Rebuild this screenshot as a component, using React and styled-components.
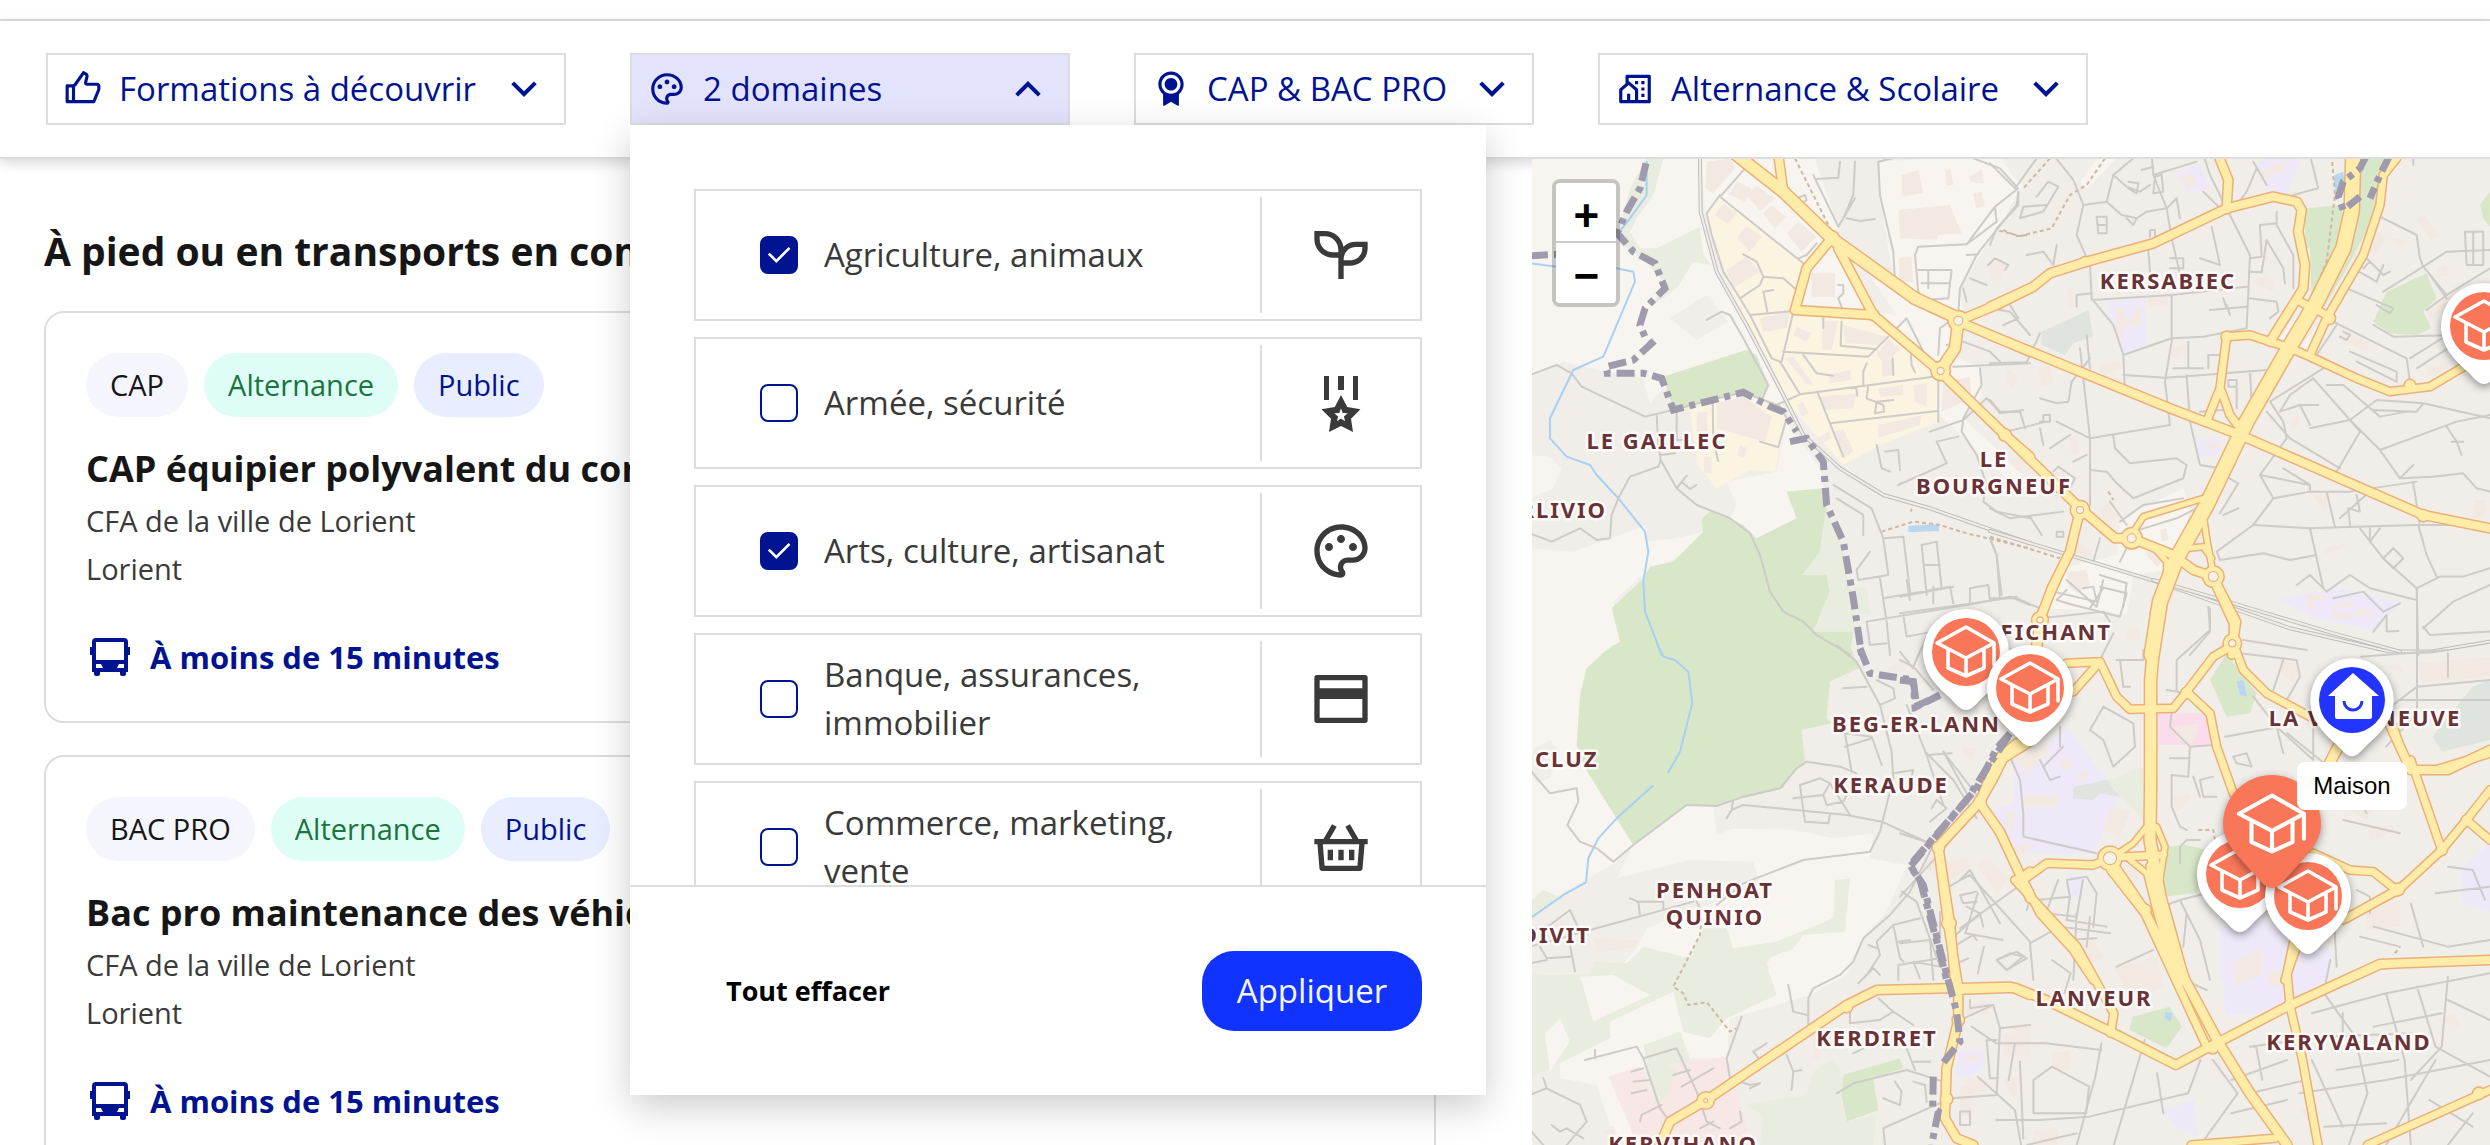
import React, { useState } from "react";
import styled, { createGlobalStyle } from "styled-components";
import {
  RiArrowDownSLine,
  RiArrowUpSLine,
  RiAwardFill,
  RiCheckLine,
  RiCommunityLine,
  RiPaletteLine,
  RiSeedlingLine,
  RiShoppingBasket2Line,
  RiThumbUpLine,
} from "react-icons/ri";

const MedalIcon = () => (
  <svg viewBox="0 0 64 64" fill="currentColor" aria-hidden="true">
    <path d="M15 5h5v24h-5zM29 5h6v14h-6zM44 5h5v24h-5z" />
    <path
      fillRule="evenodd"
      d="M32 24 38.2 36 51.5 38.2 42 47.7 44 61 32 55 20 61 22 47.7 12.5 38.2 25.8 36ZM32 37.5 30.2 42.1 25.3 42.3 29.1 45.4 27.9 50.2 32 47.5 36.1 50.2 34.9 45.4 38.7 42.3 33.8 42.1Z"
    />
  </svg>
);

const CreditCardIcon = () => (
  <svg viewBox="0 0 24 24" fill="currentColor" aria-hidden="true">
    <path
      fillRule="evenodd"
      d="M3 3h18a1 1 0 0 1 1 1v16a1 1 0 0 1-1 1H3a1 1 0 0 1-1-1V4a1 1 0 0 1 1-1ZM4 5v3h16V5ZM4 12v7h16v-7Z"
    />
  </svg>
);

const BusIcon = () => (
  <svg width="48" height="48" viewBox="0 0 48 48" fill="currentColor" aria-hidden="true">
    <path
      fillRule="evenodd"
      d="M10 5H38A4 4 0 0 1 42 9V14H44V22H42V39H40V41A2 2 0 0 1 38 43H36A2 2 0 0 1 34 41V39H14V41A2 2 0 0 1 12 43H10A2 2 0 0 1 8 41V39H6V22H4V14H6V9A4 4 0 0 1 10 5ZM10 9V27H38V9ZM10 31V35H17L15 31ZM33 31 31 35H38V31Z"
    />
  </svg>
);

const DOMAINS = [
  { id: "agriculture", label: "Agriculture, animaux", Icon: RiSeedlingLine },
  { id: "armee", label: "Armée, sécurité", Icon: MedalIcon },
  { id: "arts", label: "Arts, culture, artisanat", Icon: RiPaletteLine },
  { id: "banque", label: "Banque, assurances, immobilier", Icon: CreditCardIcon },
  { id: "commerce", label: "Commerce, marketing, vente", Icon: RiShoppingBasket2Line },
];

const FORMATIONS = [
  {
    id: 1,
    diploma: "CAP",
    title: "CAP équipier polyvalent du commerce",
    school: "CFA de la ville de Lorient",
    city: "Lorient",
    duration: "À moins de 15 minutes",
  },
  {
    id: 2,
    diploma: "BAC PRO",
    title: "Bac pro maintenance des véhicules",
    school: "CFA de la ville de Lorient",
    city: "Lorient",
    duration: "À moins de 15 minutes",
  },
];

const AREA_COLORS = {
  field: "#f8f5f0",
  town: "#f1eeea",
  zone: "#fbf4e0",
  wood: "#d8e7c8",
  grass: "#e8ede0",
  school: "#efe8f9",
  health: "#f7e8e6",
  shop: "#fbdcec",
  cemetery: "#dfe4de",
  water: "#b9d7f2",
  building: "#f3e9e3",
};

// Each tile keeps its own coordinates, the matrix puts it on the map.
const TILES = [
  {
    matrix: "matrix(.3333 0 0 .3333 -2 -4)",
    areas: [
      ["field", "M0 0H510L520 230 560 330 650 500 740 660 770 800 870 940 880 1000 770 1010 800 1090 680 1150 600 1090 620 1050 590 980 740 950 770 790 400 700 360 745 340 670 230 650 100 620 0 660Z"],
      ["field", "M0 1180 130 1190 350 1110 350 1160 440 1150 520 1130 440 1210 360 1240 250 1340 270 1460 210 1500H0Z"],
      ["field", "M0 900 60 905 95 940 70 1000 0 1030Z"],
      ["field", "M510 0H850L925 215 905 250 1030 470 1100 480 1000 330 1090 370 1050 120 1045 20 1370 0 1480 90 1290 400 1300 480 1270 600 1350 640 1355 720 1300 790 1480 960 1440 980 1230 780 1040 490 800 470 530 200Z"],
      ["town", "M420 490 530 420 595 500 500 555Z"],
      ["zone", "M570 125 820 325 790 470 1040 490 1230 660 1225 800 1050 870 940 930 770 740 650 500 580 350 530 200Z"],
      ["zone", "M480 760 560 740 720 745 770 790 735 950 660 945 560 1000 500 925Z"],
      ["wood", "M400 665 600 600 650 585 680 600 715 690 700 730 640 710 540 735 430 765Z"],
      ["wood", "M540 1070 640 1110 680 1150 800 1090 770 1010 880 1000 890 1050 870 1190 890 1260 900 1310 850 1430 970 1430 960 1500H210L270 1460 245 1360 340 1270 360 1235 430 1220 520 1130 515 1090Z"],
      ["grass", "M300 100 350 10 400 12 370 120 320 190 300 230 330 280 380 280 510 215 520 300 545 330 490 320 440 400 370 450 400 380 350 320 290 280 265 230Z"],
      ["grass", "M890 1060 930 1150 960 1300 990 1430 850 1430 900 1310 890 1260 815 1260 870 1190ZM970 1300 1010 1295 1020 1375 985 1380Z"],
      ["water", "M1135 1112 1227 1108V1128L1135 1132Z"],
      ["building", "M560 745 640 725 725 785 705 860 560 820ZM500 770H532V830H500ZM522 905H545V955H522ZM630 870 652 880 640 908 622 900Z"],
      ["building", "M530 20 600 10 615 40 550 115 525 100ZM555 180 580 145 622 175 592 208ZM620 80 665 100 645 140 598 118ZM650 120 680 92 735 130 690 168ZM700 175 725 150 768 185 735 222ZM770 235 805 200 860 245 815 290ZM620 250 650 212 695 245 660 290Z"],
      ["building", "M590 345 650 305 690 350 610 398ZM845 355H915V425H845ZM1105 165 1260 150 1295 235 1225 240 1220 255 1110 250ZM1115 60 1165 45 1180 115 1115 125ZM1245 45 1262 42 1270 90 1248 92ZM1318 65 1355 42 1362 85 1322 82ZM1330 115 1355 110 1365 155 1338 160ZM1105 310 1145 305 1150 380 1110 385Z"],
      ["building", "M690 490 780 470 770 520 700 530ZM800 515 845 535 830 560 790 540ZM880 500 925 498 905 585 875 583ZM940 510 1070 545 1050 570 945 565ZM1075 550 1110 585 1060 625 1040 600ZM1055 620 1085 610 1090 660 1055 665ZM765 610 790 605 850 690 830 685ZM895 660 960 645 965 675 900 685Z"],
      ["building", "M1045 700 1120 690V720L1050 725ZM1150 690 1190 685V755L1155 740ZM870 725 980 715 970 760 880 765ZM800 750 820 740 835 775 815 785ZM860 850 895 830 905 850 870 868ZM905 830 940 822 970 890 945 905ZM1045 810 1175 780 1170 810 1045 848ZM1240 680 1320 665 1325 730 1235 770Z"],
    ],
    streets:
      "M0 660 80 630 125 655 155 695 345 785 430 765 540 735 640 712 740 750 810 718 1210 665M380 780 385 870 392 915 385 935 300 965 265 1030 245 1080 240 1150 200 1155 150 1120 65 1160 0 1135M392 915 440 1000 500 1050 600 1090 660 1135 690 1200 720 1310 760 1370 820 1400 860 1440 960 1500M440 765V855H460M392 900 435 895M548 740 550 860 565 918M440 1000 470 962M455 980 480 1002 500 990M530 495 575 470 600 480 640 550 715 690 695 735M570 120 530 175 545 240 580 350 630 430 660 480 725 610 750 620 810 718M570 125 820 325M575 120 650 35M630 430 690 390 700 365 760 370 800 405M700 365 680 320 640 298M660 480 790 468M730 405 700 410 712 470M790 470 755 620M760 590 1015 605 1075 545M820 600 860 655 910 662M862 710 900 805 940 905M900 805 1222 768M935 500 932 572 1040 583M1225 680V800M745 748 770 790 745 877 690 860M880 490V520M1000 690 1000 650 1010 625M1088 610 1090 660M1143 600 1145 630 1155 652M1015 690 1010 730 1060 750 1062 770 1035 775 1040 740 1090 735M978 695 982 722",
    lanes:
      "M1045 20 1050 120 1090 290 1095 380M1045 20 1170 -10M850 60 925 215 940 190 970 120 975 20M855 72 925 68 930 20M925 215 975 130M950 190 990 198 1035 192M1155 300 1165 275 1310 268 1395 155 1465 100M1395 155 1400 200 1310 268M1465 110 1460 150 1340 300 1290 400 1285 480M1155 300 1165 410 1180 435 1255 430 1265 345 1165 345M1175 385H1260M1195 345V400M1460 95 1410 40 1330 10M1285 480 1230 520 1225 600M1310 300 1345 298M1375 330 1395 310 1435 330 1425 345M1300 400 1310 440M1320 370 1370 390M805 310 830 300 860 265M800 130 825 120 830 135 810 150M925 390H940V415L925 430 940 470M1000 310 1080 355M1100 520 1130 490 1150 530 1190 610M1250 570 1300 560 1380 590 1410 620M1270 635 1500 625M1350 640 1355 690 1300 790M910 990 1025 1060 1060 1150 1075 1260 985 1275 980 1245 1020 1190M920 1030 1000 1080 1000 1140M1060 1150 1120 1145 1140 1310M1175 1170 1220 1160 1235 1300M1175 1170 1190 1320M1185 1230H1230M1050 1270 1070 1400 1080 1500M1060 1330 1260 1295 1270 1345M1010 1400 1340 1345 1440 1325 1500 1350M1010 1400 1020 1470 1070 1465M1380 1150 1400 1200 1415 1320M1320 1345V1300L1375 1290 1380 1335M1120 1380 1130 1445 1210 1430M1200 830 1300 795 1370 730 1390 750 1410 775 1480 765M1300 795 1295 830 1340 900 1370 990 1360 1040 1400 1070 1500 1090M1220 860 1285 845M1220 860 1250 925 1105 990M1040 870 1055 940 1080 950M1065 890 1105 885 1110 945",
    rail: "M510 0 512 170 560 350 650 510 760 720 820 840 930 940 1060 1020 1200 1060 1500 1165",
    river:
      "M350 20 350 120 300 190 260 240M0 325 80 335M260 340 310 350 315 380 220 605 130 645 60 790 60 850 110 905 180 930 200 960 265 1030 345 1130 355 1190 340 1280 345 1370 380 1460 395 1500",
    path: "M795 10 900 220M1055 1130 1150 1100 1230 1110 1310 1135 1500 1180M1150 1040 1143 1070M1420 225 1460 243 1500 240",
    border:
      "M348 25 330 100 290 170 262 235 310 290 375 325 405 400 345 460 330 510 345 545 365 565 310 615 230 635 232 655 340 655 395 670 430 765 640 712 720 755 760 770 800 830M780 860 830 850 880 920 890 1050 940 1160 970 1330 995 1500M0 303 80 298",
    roads: [
      [11, "M620 0 760 110 905 250 1155 430 1285 490"],
      [8, "M745 0 760 110M905 250 830 340 795 465 1030 480M925 280 1030 480 1230 650 1425 840 1500 905M1290 495 1400 450 1500 400M1310 510 1500 590"],
      [10, "M1285 495 1275 580 1232 645"],
    ],
    nodes: [[905, 250, 15], [760, 110, 11], [1425, 840, 12], [1030, 480, 11], [1155, 430, 12], [1285, 497, 20, 8], [1232, 648, 19, 6]],
  },
  {
    matrix: "matrix(.3333 0 0 .3333 458 -4)",
    areas: [
      ["field", "M0 0H30L85 90 40 200 0 240ZM390 1090 580 1000 600 1060 560 1240 430 1260 410 1380 350 1370 170 1360 220 1240 380 1200Z"],
      ["field", "M270 80 330 0 380 10 290 100ZM860 560 940 460 980 480 920 590ZM1000 490 1010 500 960 590 930 580Z"],
      ["wood", "M945 160 1060 150 1040 300 965 440 960 280 945 280ZM1100 0H1190L1170 150 1060 360 1000 460 1090 200Z"],
      ["wood", "M1190 410 1310 355 1340 430 1300 470 1325 520 1280 540 1200 535 1150 500ZM1470 150 1500 110V215L1480 190Z"],
      ["school", "M350 440 465 430 470 575 395 600ZM555 60 630 25 660 100 590 110ZM795 40 830 0H940L890 120 840 115Z"],
      ["school", "M865 1335 950 1315 1060 1300 1235 1345 1150 1425 980 1390ZM620 855 690 850 690 900 630 905Z"],
      ["cemetery", "M155 530 295 465 310 545 250 565 225 600 155 570Z"],
      ["water", "M1035 60 1060 50 1065 90 1040 110 1030 90Z"],
      ["building", "M380 460H400V490H430V460H455V510L400 515V550H380ZM475 430 535 425V455H475ZM230 400H248V460H235ZM785 380 830 360 855 380 850 410ZM820 250H832V315H820Z"],
      ["building", "M570 65 610 55 620 85 600 105 580 90ZM805 50 880 20 890 40 820 75ZM1145 240 1170 230 1185 250 1155 305 1140 295ZM1200 250 1245 255 1240 280 1205 265ZM1280 190 1300 180 1350 240 1320 255ZM1340 340 1370 330 1375 360 1345 365Z"],
      ["building", "M145 640 180 630 190 685 155 695ZM50 645 85 660 70 700 50 680ZM325 630 385 620 395 640 340 665ZM545 580 590 565 595 590 550 610ZM905 790 925 780 930 805 905 830ZM650 870 690 860 690 880 650 885Z"],
      ["building", "M55 920 90 890 120 920 85 950ZM185 960 215 945 240 990 200 1040ZM325 1060 360 1045 380 1090 350 1110ZM250 1150 310 1190 300 1200 400 1235 320 1210 245 1190ZM465 1195 500 1180 530 1210 500 1235ZM230 1250 290 1245 300 1290 260 1315 235 1295ZM510 1125 530 1120 535 1155 515 1160Z"],
      ["building", "M950 1320H1010V1335H970V1365H955ZM1030 1350 1090 1340V1355H1040V1375H1095V1390H1030ZM1100 1365H1150V1380L1105 1385ZM970 1020 1010 1015 1020 1060 1000 1070ZM1450 1035H1490V1080L1455 1090ZM410 1430H450V1455H410ZM1000 1180 1060 1165 1070 1175 1000 1200ZM1310 640 1370 620 1375 640 1315 665Z"],
      ["building", "M240 850 260 840 265 900 245 900ZM1060 530 1140 560 1130 590 1060 555ZM1310 470 1370 425 1380 450 1320 500ZM0 320 45 330 30 380 0 370Z"],
    ],
    streets:
      "M190 0 250 75 280 150 260 240 300 330 305 430 370 510 400 600 405 720M280 150 350 140 370 60 430 10M485 0 490 60 530 160 545 250 580 400M640 0 660 60 780 300 770 520 640 545 545 550 400 600M545 420V560L525 680 540 810 300 850M305 435 545 420 770 395M300 640 290 540M270 580 300 850 300 1050M1010 490 1250 610 1260 680M1170 185 1280 240 1290 310 1300 335 1370 420 1310 465M1300 335 1370 290 1500 285M970 670 1080 795 1170 885 1230 970 1330 965 1420 955 1460 1000 1500 1010M1280 1300 1285 1500M790 1110 960 1120 1100 1115 1285 1110 1440 1110M1110 1120 1180 1210 1280 1300 1350 1265 1420 1265 1500 1240M1300 1420 1390 1340 1500 1290",
    lanes:
      "M0 25 75 100 140 10M85 110V150L20 220 0 270M370 60 410 95 450 110 480 90M350 140 395 180 440 190 470 170 530 160M410 190 430 210 440 190M490 60 620 20M455 45 490 35M495 65 515 60 520 110 490 115ZM415 80 445 85 440 115 415 100M640 110 690 160M570 190 560 130 530 160M400 660 525 668 640 660 830 645M0 625 110 622 150 535M320 185H350V235H325ZM325 210H350M140 125 175 80 205 95 160 170 90 190 100 155 170 150M110 300 160 290 190 330 200 270M475 285 480 350M480 245V225H495V245M540 310H580V340H540M630 310 690 330 665 215M780 310 815 305 810 210 860 205 860 170M860 210 910 300V400M780 350 815 352 830 255 880 340 885 385M780 430 860 440 865 470 840 490M660 465 770 455M700 430 710 460M710 450 720 480M260 455V420L305 415M590 660 600 800 630 930 690 940M715 675H740V695H715ZM780 650 785 740M740 700V760M630 770 700 765M655 640V600H710M550 640H640M595 560V640M0 460 60 470 120 540M60 450 85 490 40 510M840 740 1000 640M840 740 880 800 890 850 810 960 850 1030 960 1010 1080 1010 1280 980M830 770 900 850 1050 940M970 670 900 720 870 770 930 750 960 810M1080 795 960 820M930 750 985 750M1080 795 1160 735 1300 745 1500 790M1080 795 1110 830 1040 950M1010 690 1060 690 1170 785 1250 770M1170 885 1400 800 1500 780M1300 745 1280 770 1150 765M1370 815 1400 860 1415 900M1385 860H1420M1230 970 1270 930M1270 985 1290 1110M1150 1000 1050 1090M850 1030 790 1110 680 1190 690 1215 820 1195 900 1215 980 1200M810 960 960 990M880 940 960 990V1010M960 1120 1000 1300 1010 1310M1010 1010 1035 1115M1100 1020 1110 1070 1075 1060 1080 1110M1285 1110 1310 1200 1340 1265M1180 1210 1210 1180 1240 1210 1210 1240ZM1140 1120V1160L1170 1120M1010 1310 1080 1260 1140 1300 1280 1335M920 1290 960 1260 1000 1300M1030 1330 1120 1310 1180 1370 1230 1345M1300 1415 1320 1440 1500 1430M1150 1430 1190 1380 1190 1430 1225 1428M1300 335 1180 410M1425 230H1480V330H1430ZM1450 230V330M1130 310 1180 360 1200 350M1090 340 1160 380 1180 330M1140 320 1120 340M1260 610 1420 510M1280 640 1500 500M1040 510 980 600 1020 620M1080 590 1220 650V680M1100 620 1220 680M1060 530 1080 540 1070 555 1050 545M1320 360 1370 430M1150 510 1210 545 1400 540M1140 430 1210 460 1200 475 1160 450M1370 420 1500 340M1070 400 1140 430",
    extra:
      "M0 735 30 770 90 770 105 820M150 730 200 745 235 740 245 680 300 610M160 800V780H180V800L150 800M200 800 300 850M180 880 240 840M50 830 170 800M150 820 160 870M370 840 375 880 420 925 560 910 590 930 580 970 430 1030M300 945 350 950 380 985 430 1030M250 920 290 900M0 1060 60 1090 220 1070M190 950 205 935 255 970 240 1000M120 1085 155 1140M360 1040 410 1110M430 1130 560 1090 640 1050M390 1100 460 1050 580 1030M330 1260 410 1285 400 1355M280 1300 310 1295 320 1340 190 1310M0 1330 80 1330 150 1360M360 1400 340 1370 150 1390M660 1360 660 1430 600 1500M700 960 745 985 690 1075M745 1060 700 1080M310 1220 330 1150M390 1220 410 1180M200 1130H220V1145H200ZM0 1150 20 1200 30 1330M340 1300 300 1360M1270 30V0M960 0 985 100 910 120M800 40 770 110 740 150M790 20 830 90",
    rail: "M0 1128 500 1280 700 1350 900 1420 1200 1490 1320 1490 1500 1460",
    path: "M180 10 100 100M345 10 290 90 240 120 185 220 90 243 20 225M1025 0 1035 120 1010 320 960 440M0 1145 210 1210M355 1010 370 1035",
    border: "M1130 0 1110 40 1060 80 1045 125 1060 165 1110 125M1200 0 1170 60 1140 130",
    roads: [
      [5, "M640 1030 460 1085 425 1140M640 1080 650 1150 670 1260M600 1180 640 1175 665 1210M485 1170 530 1220 530 1260"],
      [8, "M0 455 130 395 180 355 290 320 490 265 710 160 850 125 920 140 935 165 925 230 945 330 940 400 840 560M685 0 715 75 710 160M0 540 540 760 750 840 1300 1080 1500 1120M0 795 45 840 270 1060 375 1150 425 1150 550 1200 610 1245 670 1265M270 1065 240 1190 185 1300 150 1395 140 1500"],
      [7, "M1220 10 1180 60 1170 150 1120 300 1010 490 960 600M930 440 1020 485M710 545 780 540 840 560 890 575 960 605 1100 670 1200 710 1320 695 1430 630M710 545 690 700 650 800M695 710 720 780 750 820M670 1265 740 1400 725 1500"],
      [14, "M1090 0 1085 170 1060 280 980 440 890 590 770 800 650 1050 560 1210 510 1340 485 1500"],
    ],
    nodes: [[270, 1065, 19, 6], [425, 1150, 21, 8], [670, 1265, 21, 9], [150, 1395, 16, 5], [727, 1465, 17, 6], [45, 840, 12], [710, 545, 11], [1300, 1082, 12], [710, 160, 11], [285, 320, 10], [1018, 490, 12], [1260, 690, 11]],
  },
  {
    matrix: "matrix(.3333 0 0 .3333 -2 486)",
    areas: [
      ["field", "M0 0H240L170 70 140 300 310 600 260 650 0 800Z"],
      ["field", "M310 600 470 480 550 485 560 550 1030 560 1020 640 1130 660 1070 800 990 890 950 990 840 1050 600 1120 590 1240 480 1240 250 1300 330 1480 260 1500 200 1320 90 1300 90 1100 0 1000 190 950 350 850 260 700Z"],
      ["town", "M260 700 480 645 670 650 690 720 480 800 350 850 320 910 280 955 190 950 180 985 0 985V820L60 780 190 740Z"],
      ["town", "M550 485 760 520 1050 540 1040 565 910 580 770 550 740 515 620 545 560 570Z"],
      ["town", "M0 380 10 310 60 285 90 320 60 400 20 415Z"],
      ["wood", "M250 0H960L985 70 900 110 890 220 905 235 815 255 825 350 790 380 760 430 560 480 470 480 310 600 165 370 140 300 150 150 170 70Z"],
      ["grass", "M0 990 180 985 190 950 290 955 340 905 480 940 520 850 590 850 610 910 740 890 910 820 915 705 960 700 945 860 820 870 790 910 710 950 740 1050 590 1120 540 1180 460 1160 430 1040 240 1130 240 1180 60 1270 0 1300Z"],
      ["grass", "M640 1380 830 1350 850 1280 910 1240 940 1290 935 1380 950 1430 1040 1410 1030 1500H690L700 1410ZM340 1200 450 1160 480 1240 400 1370 375 1380ZM0 770 40 735 100 760 0 820Z"],
      ["wood", "M940 1290 1110 1240 1120 1270 1030 1300 1045 1395 950 1430 935 1350Z"],
      ["field", "M150 995 250 990 360 1050 190 1130ZM90 1120 120 1190 60 1280 45 1165ZM350 850 470 850 490 930 360 905ZM720 940 760 920 840 950 760 990 740 1040 715 980Z"],
      ["health", "M235 1295 330 1265 375 1380 410 1360 440 1280 410 1260 590 1235 655 1455V1500H320L290 1420Z"],
      ["school", "M1285 1220 1365 1215 1360 1270 1315 1298 1280 1290ZM1450 360 1500 340V630L1450 610 1390 490 1450 480Z"],
      ["building", "M190 880 320 885V905L200 925ZM70 840 100 820 105 840 80 860ZM1170 660 1210 630 1320 670 1250 710ZM1340 660 1370 640 1440 700 1400 745ZM1295 310 1340 320 1325 345 1295 325ZM1070 70 1120 45 1130 75 1080 90Z"],
      ["building", "M1310 1230H1350V1250H1310ZM1420 1170 1500 1150V1235H1420ZM1310 1080 1375 1065 1380 1110 1310 1110ZM1310 1300 1370 1295V1340H1315ZM220 1460 250 1440 260 1480ZM1430 500H1450V540H1430ZM1450 595 1500 590V620ZM850 1160 870 1155V1240H850Z"],
    ],
    streets:
      "M0 375 60 445 140 430 145 470 112 540 150 590 200 610 250 650 310 600 470 480 560 483 640 455 750 430 800 370 830 350 930 365 980 385M920 0 980 50 1050 180 1085 320 1090 400 1050 560 1020 620 820 645 640 715 560 780M0 905 180 855 490 770M1055 530 1210 600 1140 740 1080 810 1000 880 970 950 930 990 850 1030 835 1060V1140M1055 530 950 510 640 480 605 495 590 520M605 490 610 465M165 1245 320 1205 340 1240 390 1390 420 1430M340 1240 440 1210 500 1340 530 1430 570 1450M635 1115 590 1240 600 1300 660 1320 690 1315M920 1345 970 1315 1130 1275 1240 1310",
    lanes:
      "M810 420 870 400 900 415 880 450 890 480 940 470 950 450M810 420 820 495 825 530 895 535 900 510M880 450 790 460M900 415 960 510M945 265 1025 275 1055 360M945 265 965 380M945 305 1025 280M940 130 1010 125M1090 385 1150 375 1140 410M1050 180 1095 160 1090 130 1040 105M1150 70 1110 20M1130 180 1190 330 1240 480M1190 330 1265 325M1240 320 1340 450M1200 530 1250 490 1220 465 1205 490M1115 740 1160 770 1230 965 1150 950 1170 1000M1090 840 1110 940 1120 950M1090 840 1170 820M1090 840 1040 890 1050 930 1010 990M1015 900 1040 910M1105 890 1140 885M1105 1005V960L1230 940M985 1015 1030 970 1050 990M1230 740 1320 690 1500 890M1295 750 1340 740M1290 750 1300 775 1340 770M1290 850 1500 700M1230 800V890M1400 945 1460 920 1490 940 1430 975ZM960 1080V1135L1050 1125 1090 1100 1150 1140M1045 1060 1090 1100M305 1280 340 1270M305 1345 350 1335M310 1310 360 1305M430 1290 480 1275M455 1325 550 1270M330 1430 335 1410 395 1380M510 1450 550 1430M600 1450 635 1430 630 1400M700 1260 670 1220 710 1195M770 1230 790 1280 785 1335M790 1280 815 1275M660 1330 690 1315M1060 1450 1240 1370M1095 1310 1115 1340 1110 1380 1060 1360M1150 1310 1185 1320 1190 1370M1060 1450 1065 1500M1265 1360 1400 1350 1410 1150 1390 1080 1280 1130M1410 1150 1500 1140M1370 1185H1400M1370 1185 1380 1300H1400M1290 1400H1320V1440H1290ZM1470 1250 1480 1480M1320 1065V1090L1385 1080M0 1350 50 1330 40 1300M50 1330 150 1380 170 1430 110 1500M65 1440 90 1460 110 1450 160 1480M0 1455 40 1500M300 760 325 770 330 810M320 770H400V790M500 770 515 800M30 905 50 940 120 935M0 860 60 840 120 795 155 870M0 955 50 945M120 900 135 980M775 1020 790 1100 830 1110M195 1215V1240M1150 1250H1200M1130 1210 1155 1275M970 1225 1000 1210M1290 850 1350 810M1280 900 1330 870 1340 885M1270 960 1315 940",
    rail: "",
    river: "M382 0 400 35 435 45 475 80 487 175 450 320 415 382M368 423 260 520 205 580 175 640 168 712 100 750 0 820",
    path: "M515 820 510 870 430 1025 460 1045 475 1080 530 1072 600 1160 620 1150",
    border: "M990 10 1020 85 1150 105 1160 185 1230 150M1440 265 1400 310 1340 430 1140 660 1180 720 1240 950 1280 1100 1290 1190 1235 1260M1210 1295 1208 1390 1225 1400 1205 1500",
    roads: [
      [8, "M1500 1050 1440 1025 1040 1035 950 1080 530 1365 420 1430 390 1500M1500 290 1420 340 1390 400 1350 470 1225 605 1255 840 1285 1030 1285 1125 1250 1270 1245 1420 1280 1480 1330 1500M1350 475 1410 560 1475 700 1500 760M1475 700 1500 680"],
    ],
    nodes: [[950, 1085, 12], [527, 1367, 17, 3], [1255, 835, 13], [1225, 608, 12], [1350, 470, 12], [1285, 1125, 12], [1250, 1362, 12]],
  },
  {
    matrix: "matrix(.3333 0 0 .3333 368 421)",
    areas: [
      ["school", "M500 440 660 650 580 820 300 820 280 690 370 680 330 540 440 500ZM960 1050 1200 1050 1300 1120 1280 1200H960ZM510 880 550 890V950H510Z"],
      ["wood", "M930 300 980 220 1070 340 1050 400 980 410ZM800 800 860 795 920 810 890 940 790 950ZM760 1000 830 1200H810Z"],
      ["shop", "M775 400H930V495H775Z"],
      ["grass", "M620 600 730 560V720Z"],
      ["cemetery", "M520 620 620 600 660 650 600 640 580 660 520 655Z"],
      ["water", "M1010 305 1030 300 1042 350 1020 345Z"],
      ["building", "M340 540 440 490 450 520 380 575ZM360 655 410 645 475 650V680H370ZM630 680 690 695 660 770 610 750ZM320 690 345 700 340 755 320 740ZM340 800 390 785 390 815 340 815ZM480 545 510 530 515 560 490 570ZM530 590 560 570 570 585 540 605Z"],
      ["building", "M120 850 200 830 210 860 150 900ZM240 870 270 840 310 890 275 920ZM190 500 230 505 220 530 190 520ZM1140 240 1200 250 1180 310 1150 290ZM820 650 870 640 875 660 825 700ZM1400 740 1480 735V755L1410 785ZM820 440 900 430 880 490 830 480ZM640 900 700 860 720 890 680 930ZM500 0H570L530 40ZM680 150 710 140 720 170 690 180Z"],
      ["building", "M520 1110 580 1080 610 1130 560 1160ZM1010 1060 1050 1050 1060 1080 1010 1100ZM1400 990 1500 960V1040L1400 1050ZM1330 640 1420 690 1400 720 1330 680Z"],
    ],
    streets:
      "M0 100 220 70 350 50M330 530 360 600 370 700 370 770 590 820M815 400 810 440 870 500 940 495M870 500 865 590 815 585V680L840 740 860 750M390 1090 480 1040 630 1060M390 1090 400 1200M1020 220 1190 240 1200 290 1160 360M0 760 120 800M0 950 110 830M760 990 840 960 920 940M840 960 900 1080 930 1200",
    lanes:
      "M0 50 160 20M20 0 30 60M100 20V70M0 240 40 260 80 170 180 90M40 260 100 330M80 520 160 600 230 715M130 515 200 640M480 440V500M420 540 450 600 480 590M430 560 490 500M610 380 700 430 705 500 640 560 610 480 570 450ZM640 160 600 240M650 240H730V210M660 240 670 320H690M830 330V240L930 150 925 80M1030 180 1220 210M800 330 860 340M1150 240 1120 330M810 535H865M900 780 860 780 840 800V850M880 590 900 650M940 590 900 600 910 650 950 650M1000 530 1040 520 1055 560 1010 550ZM1060 350 1130 440 1240 540M1130 440 1150 520M975 470 1140 440M1240 540V400M1330 580 1400 700M180 900 210 870 300 1030M150 1080 240 1000 200 980M240 1000 250 1040M0 1090 90 1080 100 1200M410 960 510 950 500 900 560 890 590 940 580 1040M510 950 500 1020 620 1040M410 960 420 990M530 1000 520 1200M570 1010 560 1100M490 1080 590 1075M290 1140 330 1120 370 1130 320 1170ZM650 1160 760 1110M860 1000 850 1100M1370 930 1410 950V1000M1380 1070 1500 1100M1300 980 1310 1160M500 0 590 80 610 0M600 20 680 40 660 110 500 70M520 75 470 60 500 30M400 930 380 990M1330 720 1500 760M1380 680V600L1500 620",
    rail: "M760 0 1000 70 1300 160 1500 215",
    path: "M895 750H940L945 780M1485 1120 1500 1100",
    border: "M0 300 40 305 45 380 110 350M325 470 270 550 200 660 30 860 60 900 120 1120 140 1200",
    roads: [
      [5, "M770 740 795 800 780 900M740 740 700 790 640 830M690 840 740 880 770 1000 830 1200"],
      [7, "M670 830 790 825M470 0 420 110 405 210M940 0 1000 130 1000 190 1030 270 1100 340 1230 410M1000 195 940 230 860 335 820 385 690 388 650 350 600 245 500 250M600 245 520 335M860 335 930 400 950 500 1000 640M1310 500 1280 560M1480 440 1500 500M240 670 300 760 370 900 420 1000 520 1110 580 1200M370 900 440 850 580 855 630 835M630 835 735 990 840 1200M1240 820 1350 870 1420 875 1490 930 1340 1015M1190 1100 1155 1200M1340 1200 1440 1155 1500 1150"],
      [8, "M350 490 290 540 240 665 115 800 150 1030 165 1200"],
      [11, "M805 0 770 100 752 300 752 600 750 780 780 950 850 1200"],
    ],
    nodes: [[630, 835, 24, 12], [997, 190, 18, 6], [420, 120, 16, 5], [240, 670, 12], [115, 803, 12], [150, 1030, 12], [735, 990, 12], [860, 338, 11], [1490, 930, 12]],
  },
  {
    matrix: "matrix(.6186 0 0 .3333 -12 601)",
    areas: [
      ["school", "M1130 500 1200 480 1310 600 1305 660 1200 760 1140 765ZM1520 330 1568 250V460L1525 430ZM1040 1050 1090 1020 1095 1130 1060 1100Z"],
      ["wood", "M990 770 1050 740 1070 800 1045 865 985 810Z"],
      ["water", "M1043 755 1055 760 1052 785 1043 775Z"],
      ["building", "M960 620 1030 590 1040 680 990 720ZM1150 610 1200 560 1200 640 1160 680ZM860 880 890 870V930H860ZM790 800 820 790V840ZM1110 900 1130 890 1140 960ZM1260 1050 1290 1040 1290 1120ZM780 960 810 950 800 1020ZM1480 780 1510 760 1520 800ZM1210 640 1230 630V680H1210ZM710 980 730 970V1070H712ZM830 1110 870 1100V1155H830Z"],
    ],
    streets:
      "M740 950 800 1050 810 1155M940 850 930 950 900 1155M1010 840 960 1155M770 1080 840 1080 920 1070 1080 1000 1100 900M1030 940 1040 1060M1120 900 1160 1000 1100 1155M1260 1000 1400 960 1568 900M1300 700 1350 830 1370 1000 1340 1155M1280 760 1400 700 1568 640M1400 700 1430 900 1440 1155M1450 680 1480 860 1568 950",
    lanes:
      "M730 800 770 850 850 850 940 870M830 960 860 920 920 980 915 1060 830 1060ZM800 850 790 960M1150 960 1240 900M1180 860 1300 830 1440 820M1500 650 1490 860 1440 960M1310 600 1300 690M1380 500 1500 560 1568 540M1440 430 1460 560M1480 400 1568 380M1280 900 1330 1100M1400 1155 1480 900M1150 1060 1240 1020M1540 1060 1500 1155M1470 1020 1540 1100M1300 1100 1400 1090M1320 930 1420 900M1500 720 1568 780M1380 800 1490 760M740 400 720 520 780 540M750 560 740 640M860 600 890 640 880 700M870 360 850 460 900 470 910 360M1050 640 1110 690M1190 860 1200 960M1330 760V830M820 1155 900 1120M1180 1000 1270 960M1560 420 1540 330 1500 320",
    roads: [
      [8, "M700 690 800 683 850 720 960 820 1060 915 1110 865 1240 740 1390 612 1568 600"],
      [7, "M955 330 1010 460 1060 660 1110 860M1245 740 1265 900 1290 1155M1250 550 1240 640 1245 740M800 360 900 560 960 760 955 820M1085 1155 1220 1135M1370 1155 1568 990M1440 0 1490 270 1420 390 1330 480M1490 270 1530 180 1568 90M1530 180 1568 240M1440 30 1480 30 1568 -20"],
      [9, "M1020 320 1045 520 1075 660 1130 850 1180 1000 1240 1155"],
    ],
    nodes: [[1245, 735, 12], [1120, 865, 11], [1550, 1000, 12], [1420, 388, 12], [1490, 270, 11], [1530, 180, 10]],
  },
  {
    matrix: "matrix(.6186 0 0 .3333 -12 221)",
    areas: [
      ["cemetery", "M1475 1070 1540 920 1568 900V1080L1490 1115Z"],
      ["building", "M1450 850 1568 830V890L1460 910ZM1390 860 1420 850 1430 880Z"],
    ],
    streets: "M1450 630V1000M1380 1020 1450 920 1568 900",
    lanes: "M1240 1060 1300 1150M1450 1000 1400 1100M1360 830 1500 810M1500 820V890M1420 960 1568 960",
    roads: [[8, "M1405 1030 1440 1170 1500 1170 1568 1110M1330 1080 1310 1150"]],
    nodes: [],
  },
];

const PLACES = [
  { name: "KERSABIEC", x: 636, y: 130 },
  { name: "LE GAILLEC", x: 125, y: 290 },
  { name: "LE", x: 462, y: 308 },
  { name: "BOURGNEUF", x: 462, y: 335 },
  { name: "KERLIVIO", x: 75, y: 359, anchor: "end" },
  { name: "FICHANT", x: 580, y: 481, anchor: "end" },
  { name: "BEG-ER-LANN", x: 300, y: 573, anchor: "start" },
  { name: "LA VILLENEUVE", x: 833, y: 567 },
  { name: "CLUZ", x: 3, y: 608, anchor: "start" },
  { name: "KERAUDE", x: 359, y: 634 },
  { name: "PENHOAT", x: 183, y: 739 },
  { name: "QUINIO", x: 183, y: 766 },
  { name: "KERDIVIT", x: 59, y: 784, anchor: "end" },
  { name: "KERDIRET", x: 345, y: 887 },
  { name: "LANVEUR", x: 562, y: 847 },
  { name: "KERYVALAND", x: 817, y: 891 },
  { name: "KERVIHANO", x: 151, y: 993 },
];

const SCHOOL_PINS = [
  { x: 952, y: 167 },
  { x: 434, y: 493 },
  { x: 498, y: 529 },
  { x: 708, y: 715 },
  { x: 776, y: 737 },
];

const PIN_SHAPE =
  "M0 58C-6 58-10 52-16 46C-32 32-43 19-43 0A43 43 0 0 1 43 0C43 19 32 32 16 46C10 52 6 58 0 58Z";

const CapDrawing = () => (
  <path
    fill="none"
    stroke="#fff"
    strokeWidth="3.6"
    strokeLinejoin="round"
    strokeLinecap="round"
    d="M-29-9 0-25 28-9 0 6ZM-18-3V16L0 24 18 16V-3M0 6V24M28-9V13"
  />
);

const SchoolPin = ({ x, y }) => (
  <Pin transform={`translate(${x} ${y})`}>
    <path d={PIN_SHAPE} fill="#fff" />
    <circle r="34" fill="#fa7659" />
    <CapDrawing />
  </Pin>
);

const tileLayer = (render) =>
  TILES.map((tile) => (
    <g key={tile.matrix} transform={tile.matrix}>
      {render(tile)}
    </g>
  ));

const CityMap = () => (
  <MapDrawing viewBox="0 0 958 986" preserveAspectRatio="xMinYMin slice" role="img" aria-label="Carte de Lorient">
    <rect width="958" height="986" fill="#f1eeea" />
    {tileLayer((t) => t.areas.map(([kind, d]) => <path key={d} d={d} fill={AREA_COLORS[kind]} />))}
    {tileLayer((t) => (
      <>
        <Line $color="#a9d0f2" $width={2} d={t.river} />
        <Line $color="#cbb9a5" $width={2} $dash="4 3" d={t.path} />
        <Line $color="#cecbc8" $width={2} d={t.lanes} />
        <Line $color="#cecbc8" $width={2} d={t.extra} />
        <Line $color="#cecbc8" $width={2} d={t.streets} />
        <Line $color="#bdbcba" $width={4} d={t.rail} />
        <Line $color="#f1eeea" $width={2} d={t.rail} />
      </>
    ))}
    {tileLayer((t) => (
      <>
        {t.roads.map(([w, d]) => (
          <Line key={d} $color="#ebb077" $width={w + 3} d={d} />
        ))}
        {t.nodes.map(([x, y, size]) => (
          <Line key={`${x}-${y}`} $color="#ebb077" $width={size + 2} d={`M${x} ${y}h.1`} />
        ))}
      </>
    ))}
    {tileLayer((t) => (
      <>
        {t.roads.map(([w, d]) => (
          <Line key={d} $color="#ffeca8" $width={w} d={d} />
        ))}
        {t.nodes.map(([x, y, size]) => (
          <Line key={`${x}-${y}`} $color="#ffeca8" $width={size - 1} d={`M${x} ${y}h.1`} />
        ))}
      </>
    ))}
    {tileLayer((t) =>
      t.nodes
        .filter((node) => node[3])
        .map(([x, y, , hole]) => (
          <React.Fragment key={`${x}-${y}`}>
            <Line $color="#ebb077" $width={hole + 2} d={`M${x} ${y}h.1`} />
            <Line $color="#f4f0ea" $width={hole} d={`M${x} ${y}h.1`} />
          </React.Fragment>
        ))
    )}
    {tileLayer((t) => (
      <BorderLine d={t.border} />
    ))}
    {PLACES.map(({ name, x, y, anchor = "middle" }) => (
      <PlaceName key={name} x={x} y={y} textAnchor={anchor}>
        {name}
      </PlaceName>
    ))}
    {SCHOOL_PINS.map((pin) => (
      <SchoolPin key={`${pin.x}-${pin.y}`} {...pin} />
    ))}
    <Pin transform="translate(740 665)">
      <path
        d="M0 64C-6 64-11 58-17 51C-36 30-49 18-49 0A49 49 0 0 1 49 0C49 18 36 30 17 51C11 58 6 64 0 64Z"
        fill="#fa7659"
      />
      <g transform="scale(1.14)">
        <CapDrawing />
      </g>
    </Pin>
    <Pin transform="translate(820 541)">
      <path d={PIN_SHAPE} fill="#fff" transform="scale(.97)" />
      <circle r="33" fill="#2334ff" />
      <path d="M-24-4 1-27 27-4H20V17A2 2 0 0 1 18 19H-15A2 2 0 0 1-17 17V-4Z" fill="#fff" />
      <path d="M-8 1A9 9 0 0 0 10 1" fill="none" stroke="#2334ff" strokeWidth="3" />
    </Pin>
  </MapDrawing>
);

const FilterButton = ({ Icon, label, width, open, onClick }) => (
  <Filter type="button" $width={width} $open={open} aria-expanded={Boolean(open)} onClick={onClick}>
    <Icon size={38} />
    <span>{label}</span>
    {open ? <RiArrowUpSLine size={48} /> : <RiArrowDownSLine size={48} />}
  </Filter>
);

const DomainMenu = ({ selected, onToggle, onClear }) => (
  <Menu>
    <MenuList>
      {DOMAINS.map(({ id, label, Icon }) => (
        <Option key={id} htmlFor={id}>
          <CheckBox>
            <input id={id} type="checkbox" checked={selected.includes(id)} onChange={() => onToggle(id)} />
            {selected.includes(id) && <RiCheckLine size={32} />}
          </CheckBox>
          <OptionLabel>{label}</OptionLabel>
          <OptionIcon>
            <Icon />
          </OptionIcon>
        </Option>
      ))}
    </MenuList>
    <MenuFooter>
      <ClearButton type="button" onClick={onClear}>
        Tout effacer
      </ClearButton>
      <ApplyButton type="button">Appliquer</ApplyButton>
    </MenuFooter>
  </Menu>
);

const FormationCard = ({ formation }) => (
  <Card>
    <Tags>
      <Tag>{formation.diploma}</Tag>
      <Tag $tone="green">Alternance</Tag>
      <Tag $tone="blue">Public</Tag>
    </Tags>
    <CardTitle>{formation.title}</CardTitle>
    <CardText>{formation.school}</CardText>
    <CardText>{formation.city}</CardText>
    <Travel>
      <BusIcon />
      {formation.duration}
    </Travel>
  </Card>
);

const App = () => {
  const [selected, setSelected] = useState(["agriculture", "arts"]);
  const [open, setOpen] = useState(true);

  const toggle = (id) =>
    setSelected((list) => (list.includes(id) ? list.filter((item) => item !== id) : [...list, id]));

  return (
    <Page>
      <GlobalStyle />
      <TopLine />
      <Filters>
        <FilterButton Icon={RiThumbUpLine} label="Formations à découvrir" width={520} />
        <MenuAnchor>
          <FilterButton
            Icon={RiPaletteLine}
            label={`${selected.length} domaines`}
            width={440}
            open={open}
            onClick={() => setOpen(!open)}
          />
          {open && <DomainMenu selected={selected} onToggle={toggle} onClear={() => setSelected([])} />}
        </MenuAnchor>
        <FilterButton Icon={RiAwardFill} label="CAP & BAC PRO" width={400} />
        <FilterButton Icon={RiCommunityLine} label="Alternance & Scolaire" width={490} />
      </Filters>
      <Content>
        <Results>
          <ResultsTitle>À pied ou en transports en commun</ResultsTitle>
          {FORMATIONS.map((formation) => (
            <FormationCard key={formation.id} formation={formation} />
          ))}
        </Results>
        <MapPanel>
          <CityMap />
          <ZoomControl>
            <button type="button" aria-label="Zoomer">
              +
            </button>
            <button type="button" aria-label="Dézoomer">
              −
            </button>
          </ZoomControl>
          <Tooltip>Maison</Tooltip>
        </MapPanel>
      </Content>
    </Page>
  );
};

export default App;

const GlobalStyle = createGlobalStyle`
  * {
    box-sizing: border-box;
  }

  body {
    margin: 0;
    background: #fff;
    color: #161616;
    font-family: "Open Sans", "Noto Sans", sans-serif;
  }

  button {
    font-family: inherit;
    cursor: pointer;
  }
`;

const Page = styled.div`
  display: flex;
  flex-direction: column;
  height: 100vh;
  overflow: hidden;
`;

const TopLine = styled.div`
  flex: none;
  height: 21px;
  border-bottom: 2px solid #ddd;
`;

const Filters = styled.header`
  position: relative;
  z-index: 1;
  flex: none;
  display: flex;
  gap: 64px;
  padding: 32px 46px;
  border-bottom: 2px solid #ddd;
  background: #fff;
  box-shadow: 0 4px 12px rgba(0, 0, 0, 0.16);
`;

const MenuAnchor = styled.div`
  position: relative;
`;

const Filter = styled.button`
  display: flex;
  align-items: center;
  gap: 17px;
  width: ${({ $width }) => $width}px;
  height: 72px;
  padding: 0 16px;
  border: 2px solid #ddd;
  background: ${({ $open }) => ($open ? "#e3e3fd" : "#fff")};
  color: #001391;
  font-size: 33px;
  line-height: 48px;
  text-align: left;
  white-space: nowrap;

  span {
    flex: 1;
    min-width: 0;
  }

  svg {
    flex: none;
  }
`;

const Menu = styled.div`
  position: absolute;
  top: 100%;
  left: 0;
  width: 856px;
  background: #fff;
  box-shadow: 0 12px 36px rgba(0, 0, 18, 0.2);
`;

const MenuList = styled.div`
  display: flex;
  flex-direction: column;
  gap: 16px;
  height: 760px;
  padding: 64px;
  overflow-y: auto;
  scrollbar-width: none;
`;

const Option = styled.label`
  flex: none;
  display: flex;
  align-items: center;
  min-height: 132px;
  padding: 6px 0 6px 64px;
  border: 2px solid #ddd;
  color: #3a3a3a;
  cursor: pointer;
`;

const CheckBox = styled.span`
  position: relative;
  flex: none;
  width: 38px;
  height: 38px;

  input {
    appearance: none;
    display: block;
    width: 38px;
    height: 38px;
    margin: 0;
    border: 2px solid #001391;
    border-radius: 8px;
  }

  input:checked {
    background: #001391;
  }

  svg {
    position: absolute;
    inset: 3px;
    color: #fff;
    pointer-events: none;
  }
`;

const OptionLabel = styled.span`
  flex: 1;
  padding: 0 16px 0 26px;
  font-size: 33px;
  font-weight: 500;
  line-height: 48px;
`;

const OptionIcon = styled.span`
  flex: none;
  display: flex;
  align-items: center;
  justify-content: center;
  align-self: stretch;
  width: 160px;
  border-left: 2px solid #ddd;

  svg {
    width: 64px;
    height: 64px;
  }
`;

const MenuFooter = styled.div`
  display: flex;
  align-items: center;
  justify-content: space-between;
  padding: 64px;
  border-top: 2px solid #ddd;
`;

const ClearButton = styled.button`
  padding: 16px 32px;
  border: 0;
  background: none;
  color: #000;
  font-size: 27px;
  font-weight: 700;
  line-height: 48px;
`;

const ApplyButton = styled.button`
  min-width: 220px;
  height: 80px;
  padding: 0 28px;
  border: 0;
  border-radius: 32px;
  background: #1033ff;
  color: #f5f5fe;
  font-size: 33px;
  line-height: 48px;
`;

const Content = styled.main`
  flex: 1;
  display: grid;
  grid-template-columns: minmax(0, 8fr) minmax(0, 5fr);
  min-height: 0;
`;

const Results = styled.section`
  display: flex;
  flex-direction: column;
  gap: 32px;
  padding: 64px 96px 0 44px;
  overflow: hidden;
`;

const ResultsTitle = styled.h1`
  margin: 0;
  font-size: 39px;
  font-weight: 700;
  line-height: 56px;
`;

const Card = styled.article`
  flex: none;
  padding: 40px;
  border: 2px solid #ddd;
  border-radius: 20px;
`;

const Tags = styled.div`
  display: flex;
  gap: 16px;
  margin-bottom: 24px;
`;

const TAG_TONES = {
  plain: "background: #f5f5fe; color: #161616;",
  green: "background: #dffdf7; color: #18753c;",
  blue: "background: #e8edff; color: #001391;",
};

const Tag = styled.span`
  padding: 8px 24px;
  border-radius: 32px;
  font-size: 29px;
  font-weight: 500;
  line-height: 48px;
  ${({ $tone = "plain" }) => TAG_TONES[$tone]}
`;

const CardTitle = styled.h2`
  margin: 0;
  font-size: 36px;
  font-weight: 700;
  line-height: 56px;
`;

const CardText = styled.p`
  margin: 0;
  color: #3a3a3a;
  font-size: 29px;
  line-height: 48px;
`;

const Travel = styled.div`
  display: flex;
  align-items: center;
  gap: 16px;
  margin-top: 40px;
  color: #001391;
  font-size: 31px;
  font-weight: 700;
  line-height: 48px;
`;

const MapPanel = styled.aside`
  position: relative;
  z-index: 2;
  overflow: hidden;
  background: #f1eeea;
`;

const MapDrawing = styled.svg`
  display: block;
  width: 100%;
  height: 100%;
`;

const Line = styled.path`
  fill: none;
  stroke: ${({ $color }) => $color};
  stroke-width: ${({ $width }) => $width}px;
  stroke-dasharray: ${({ $dash = "none" }) => $dash};
  stroke-linecap: ${({ $dash }) => ($dash ? "butt" : "round")};
  stroke-linejoin: round;
  vector-effect: non-scaling-stroke;
`;

const BorderLine = styled.path`
  fill: none;
  stroke: #9f9bad;
  stroke-width: 7px;
  stroke-dasharray: 18 6 6 6;
  vector-effect: non-scaling-stroke;
`;

const PlaceName = styled.text`
  fill: #6a3236;
  stroke: rgba(255, 255, 255, 0.8);
  stroke-width: 5px;
  stroke-linejoin: round;
  paint-order: stroke;
  font-family: "Noto Sans", "Open Sans", sans-serif;
  font-size: 22px;
  font-weight: 700;
  letter-spacing: 2px;
`;

const Pin = styled.g`
  filter: drop-shadow(0 3px 4px rgba(0, 0, 0, 0.4));
`;

const ZoomControl = styled.div`
  position: absolute;
  top: 20px;
  left: 20px;
  display: flex;
  flex-direction: column;
  border: 4px solid rgba(0, 0, 0, 0.2);
  border-radius: 8px;
  background-clip: padding-box;

  button {
    width: 60px;
    height: 60px;
    padding: 6px 0 0;
    border: 0;
    background: #fff;
    color: #000;
    font-family: "Liberation Sans", sans-serif;
    font-size: 44px;
    font-weight: 700;
    line-height: 54px;
  }

  button:first-child {
    border-bottom: 2px solid #ccc;
    border-radius: 4px 4px 0 0;
  }

  button:last-child {
    border-radius: 0 0 4px 4px;
  }
`;

const Tooltip = styled.div`
  position: absolute;
  top: 603px;
  left: 765px;
  padding: 8px 16px;
  border-radius: 8px;
  background: #fff;
  color: #000;
  font-family: "Liberation Sans", sans-serif;
  font-size: 24px;
  line-height: 32px;
`;
